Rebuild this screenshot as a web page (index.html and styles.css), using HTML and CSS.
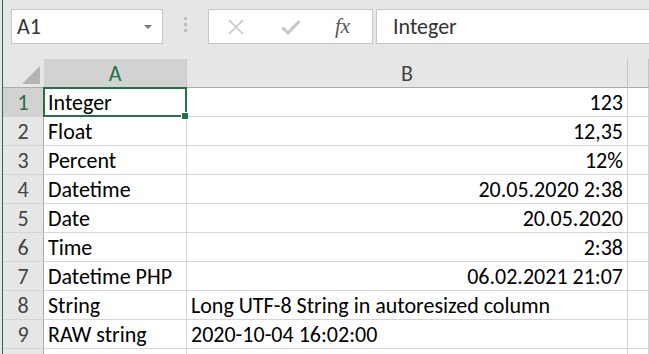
FILE: index.html
```html
<!DOCTYPE html>
<html lang="en">
<head>
  <meta charset="UTF-8">
  <title>Sheet</title>
  <link rel="stylesheet" href="styles.css">
</head>
<body>
  <div class="window">

    <div class="toolbar">
      <div class="namebox">
        <span>A1</span>
        <span class="arrow"></span>
      </div>
      <div class="grip"><i></i><i></i><i></i></div>
      <div class="fbuttons">
        <svg class="ico" width="18" height="16" viewBox="0 0 18 16">
          <path d="M2 1 L16 15 M16 1 L2 15" stroke="#c6c6c6" stroke-width="1.6" fill="none"/>
        </svg>
        <svg class="ico" width="20" height="16" viewBox="0 0 20 16">
          <path d="M1.5 8.5 L7 14 L18.5 2" stroke="#c6c6c6" stroke-width="3" fill="none"/>
        </svg>
        <span class="fx">fx</span>
      </div>
      <div class="formula">Integer</div>
    </div>

    <div class="sheet">
      <div class="corner"><span class="tri"></span></div>
      <div class="colhead sel">A</div>
      <div class="colhead">B</div>
      <div class="colhead"></div>

      <div class="rowhead sel">1</div>
      <div class="cell active">Integer<span class="cursor"><span class="handle"></span></span></div>
      <div class="cell num">123</div>
      <div class="cell"></div>

      <div class="rowhead">2</div>
      <div class="cell">Float</div>
      <div class="cell num">12,35</div>
      <div class="cell"></div>

      <div class="rowhead">3</div>
      <div class="cell">Percent</div>
      <div class="cell num">12%</div>
      <div class="cell"></div>

      <div class="rowhead">4</div>
      <div class="cell">Datetime</div>
      <div class="cell num">20.05.2020 2:38</div>
      <div class="cell"></div>

      <div class="rowhead">5</div>
      <div class="cell">Date</div>
      <div class="cell num">20.05.2020</div>
      <div class="cell"></div>

      <div class="rowhead">6</div>
      <div class="cell">Time</div>
      <div class="cell num">2:38</div>
      <div class="cell"></div>

      <div class="rowhead">7</div>
      <div class="cell">Datetime PHP</div>
      <div class="cell num">06.02.2021 21:07</div>
      <div class="cell"></div>

      <div class="rowhead">8</div>
      <div class="cell">String</div>
      <div class="cell">Long UTF-8 String in autoresized column</div>
      <div class="cell"></div>

      <div class="rowhead">9</div>
      <div class="cell">RAW string</div>
      <div class="cell">2020-10-04 16:02:00</div>
      <div class="cell"></div>

      <div class="rowhead"></div>
      <div class="cell"></div>
      <div class="cell"></div>
      <div class="cell"></div>
    </div>

  </div>
</body>
</html>
```

FILE: styles.css
```css
body {
  margin: 0;
  background-color: #e6e6e6;
  font-family: Carlito, "Open Sans", sans-serif;
  font-size: 22px;
  color: #000;
  overflow: hidden;
}

.window {
  height: 354px;
  overflow: hidden;
  margin-left: 2px;
  border-left: 1px solid #217346;
  background-color: #fff;
}

/* Formelleiste */
.toolbar {
  height: 59px;
  background-color: #e6e6e6;
  display: flex;
  align-items: flex-start;
  padding-top: 9px;
  box-sizing: border-box;
}

.namebox {
  margin-left: 8px;
  width: 152px;
  height: 35px;
  box-sizing: border-box;
  border: 1px solid #c6c6c6;
  background-color: #fff;
  display: flex;
  align-items: center;
  justify-content: space-between;
  padding: 0 10px 0 5px;
  color: #333;
}

.arrow {
  width: 0;
  height: 0;
  border-left: 4px solid transparent;
  border-right: 4px solid transparent;
  border-top: 4px solid #777;
}

.grip {
  width: 45px;
  display: flex;
  flex-direction: column;
  align-items: center;
  gap: 3px;
  padding-top: 8px;
}

.grip i {
  width: 3px;
  height: 3px;
  background-color: #bdbdbd;
}

.fbuttons {
  width: 165px;
  height: 35px;
  box-sizing: border-box;
  border: 1px solid #c6c6c6;
  background-color: #fff;
  display: flex;
  align-items: center;
  padding-left: 18px;
  gap: 36px;
}

.fbuttons .ico {
  display: block;
}

.fx {
  font-family: "Liberation Serif", serif;
  font-style: italic;
  font-size: 21px;
  color: #555;
  margin-left: -2px;
}

.formula {
  flex: 1;
  margin-left: 3px;
  height: 35px;
  box-sizing: border-box;
  border: 1px solid #c6c6c6;
  border-right: none;
  background-color: #fff;
  padding-left: 16px;
  line-height: 33px;
  color: #333;
}

/* Tabelle */
.sheet {
  display: grid;
  grid-template-columns: 41px 143px 441px 1fr;
  grid-auto-rows: 29px;
  background-color: #fff;
}

.corner,
.colhead,
.rowhead {
  background-color: #e6e6e6;
  color: #444;
  border-right: 1px solid #ababab;
  border-bottom: 1px solid #ababab;
  display: flex;
  align-items: center;
  justify-content: center;
}

.corner {
  position: relative;
  border-right-color: #e6e6e6;
}

.tri {
  position: absolute;
  right: 3px;
  bottom: 3px;
  width: 0;
  height: 0;
  border-left: 18px solid transparent;
  border-bottom: 18px solid #b4b4b4;
}

.colhead {
  border-right-color: #c6c6c6;
}

.rowhead {
  border-bottom-color: #d4d4d4;
  border-right-color: #ababab;
}

.colhead.sel,
.rowhead.sel {
  background-color: #d2d2d2;
  color: #217346;
}

.colhead.sel {
  border-bottom: 1px solid #217346;
}

.cell {
  border-right: 1px solid #d4d4d4;
  border-bottom: 1px solid #d4d4d4;
  padding: 0 4px;
  display: flex;
  align-items: center;
  white-space: nowrap;
}

.cell.num {
  justify-content: flex-end;
}

.cell.active {
  position: relative;
}

.cursor {
  position: absolute;
  left: -1px;
  top: -1px;
  right: -1px;
  bottom: -1px;
  border: 2px solid #217346;
}

.handle {
  position: absolute;
  right: -3px;
  bottom: -4px;
  width: 6px;
  height: 6px;
  background-color: #217346;
  border: 1px solid #fff;
  border-right: none;
  border-bottom: none;
}
```
